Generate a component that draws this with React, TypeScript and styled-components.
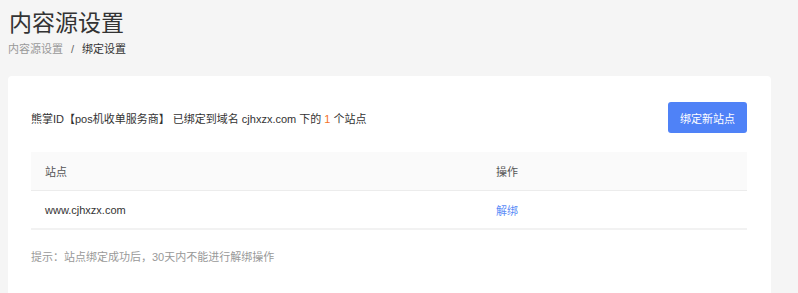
import React from "react";
import styled, { createGlobalStyle } from "styled-components";

const Global = createGlobalStyle`
  html, body { margin: 0; padding: 0; background: #f5f5f5; }
  body { font-family: "Liberation Sans", "Noto Sans CJK SC", sans-serif; color: #333; }
`;

const Page = styled.div`
  padding: 8px 27px 0 8px;
`;

const Title = styled.h1`
  margin: 0 0 0 1px;
  font-size: 23px;
  line-height: 30px;
  font-weight: 400;
  color: #333;
`;

const Crumbs = styled.div`
  display: flex;
  align-items: center;
  gap: 8px;
  margin-top: 2px;
  font-size: 11px;
  line-height: 18px;
`;

const Crumb = styled.span<{ $active?: boolean }>`
  color: ${(p) => (p.$active ? "#333" : "#999")};
`;

const Sep = styled.span`
  color: #666;
`;

const Card = styled.div`
  margin-top: 18px;
  background: #fff;
  border-radius: 4px;
  padding: 26px 24px 40px 23px;
`;

const TopRow = styled.div`
  display: flex;
  align-items: center;
  justify-content: space-between;
`;

const Info = styled.div`
  font-size: 11px;
  color: #333;
`;

const Count = styled.span`
  color: #f5722a;
`;

const Button = styled.button`
  width: 79px;
  height: 31px;
  border: none;
  border-radius: 3px;
  background: #4f82f7;
  color: #fff;
  font-family: inherit;
  font-size: 11px;
  padding: 0;
`;

const Table = styled.div`
  margin-top: 19px;
`;

const Row = styled.div<{ $head?: boolean }>`
  display: grid;
  grid-template-columns: 451px 1fr;
  height: ${(p) => (p.$head ? "38px" : "37px")};
  align-items: center;
  background: ${(p) => (p.$head ? "#fafafa" : "#fff")};
  border-bottom: ${(p) => (p.$head ? "1px solid #ececec" : "2px solid #f2f2f2")};
  font-size: 11px;
  color: ${(p) => (p.$head ? "#555" : "#333")};
`;

const Cell = styled.div`
  padding-left: 14px;
`;

const Link = styled.a`
  color: #5b8cf7;
  cursor: pointer;
`;

const Tip = styled.div`
  margin-top: 18px;
  font-size: 11px;
  color: #999;
`;

export default function App() {
  return (
    <>
      <Global />
      <Page>
        <Title>内容源设置</Title>
        <Crumbs>
          <Crumb>内容源设置</Crumb>
          <Sep>/</Sep>
          <Crumb $active>绑定设置</Crumb>
        </Crumbs>
        <Card>
          <TopRow>
            <Info>
              熊掌ID【pos机收单服务商】 已绑定到域名 cjhxzx.com 下的 <Count>1</Count> 个站点
            </Info>
            <Button>绑定新站点</Button>
          </TopRow>
          <Table>
            <Row $head>
              <Cell>站点</Cell>
              <Cell>操作</Cell>
            </Row>
            <Row>
              <Cell>www.cjhxzx.com</Cell>
              <Cell>
                <Link>解绑</Link>
              </Cell>
            </Row>
          </Table>
          <Tip>提示：站点绑定成功后，30天内不能进行解绑操作</Tip>
        </Card>
      </Page>
    </>
  );
}
